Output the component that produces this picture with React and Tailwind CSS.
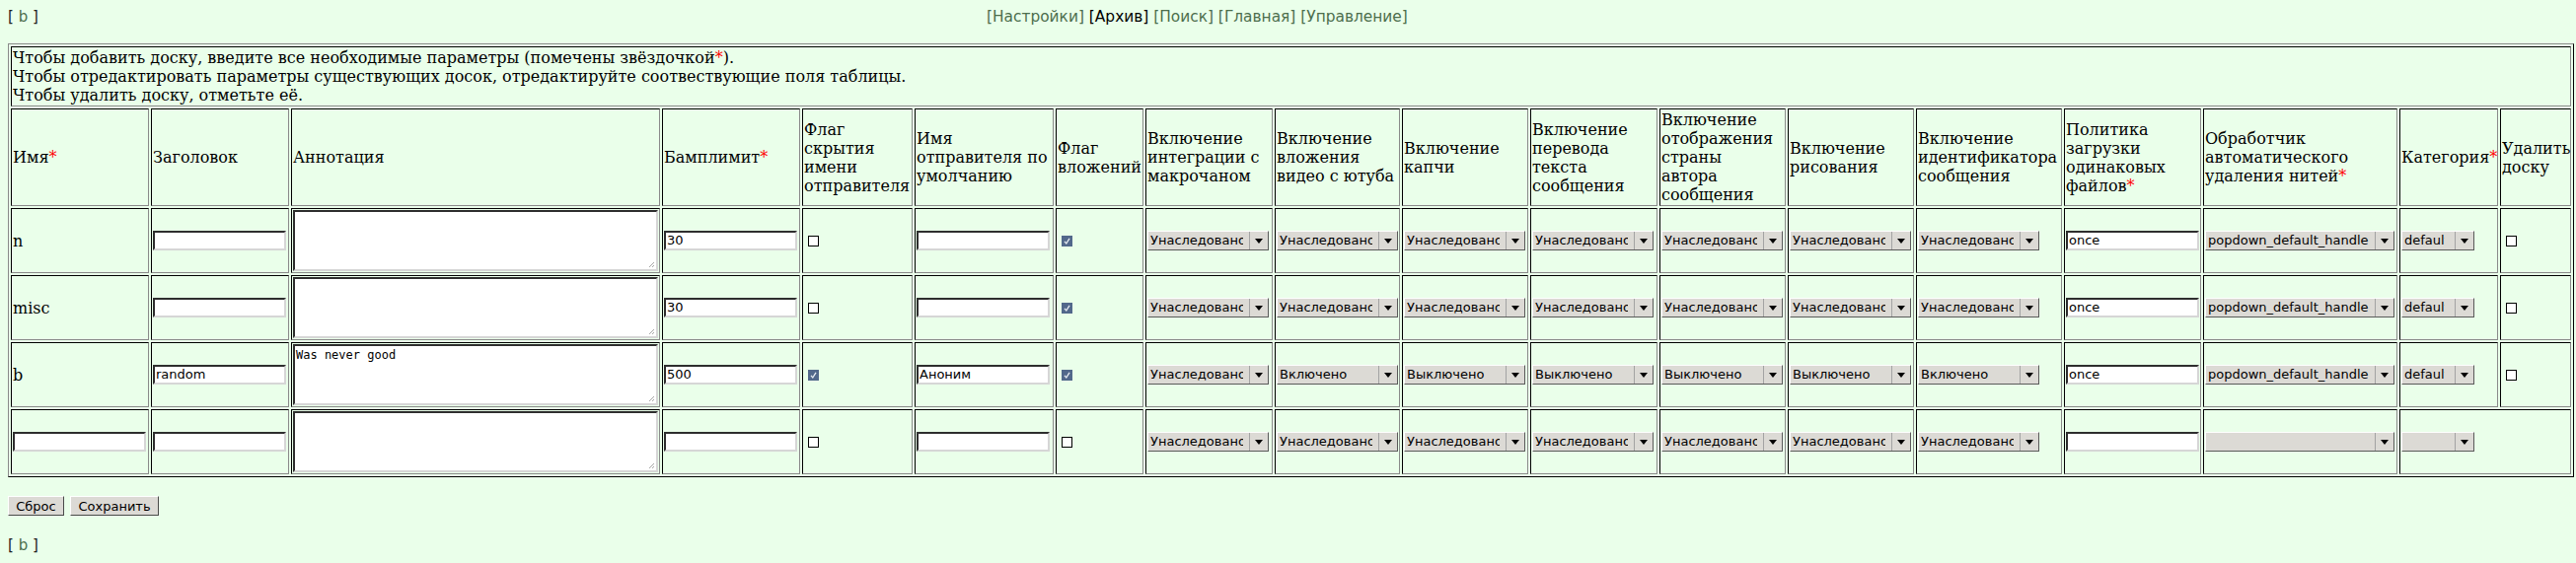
import clsx from "clsx";

const cols = [140, 140, 374, 140, 112, 141, 89, 129, 127, 128, 129, 128, 128, 148, 139, 197, 100, 72];
const colW = [
  "w-[140px]", "w-[140px]", "w-[374px]", "w-[140px]", "w-[112px]", "w-[141px]", "w-[89px]", "w-[129px]", "w-[127px]",
  "w-[128px]", "w-[129px]", "w-[128px]", "w-[128px]", "w-[148px]", "w-[139px]", "w-[197px]", "w-[100px]", "w-[72px]",
];

const star = <span className="text-[#ff0000]">*</span>;

const heads = [
  [<>Имя{star}</>],
  ["Заголовок"],
  ["Аннотация"],
  [<>Бамплимит{star}</>],
  ["Флаг", "скрытия", "имени", "отправителя"],
  ["Имя", "отправителя по", "умолчанию"],
  ["Флаг", "вложений"],
  ["Включение", "интеграции с", "макрочаном"],
  ["Включение", "вложения", "видео с ютуба"],
  ["Включение", "капчи"],
  ["Включение", "перевода", "текста", "сообщения"],
  ["Включение", "отображения", "страны", "автора", "сообщения"],
  ["Включение", "рисования"],
  ["Включение", "идентификатора", "сообщения"],
  ["Политика", "загрузки", "одинаковых", <>файлов{star}</>],
  ["Обработчик", "автоматического", <>удаления нитей{star}</>],
  [<>Категория{star}</>],
  ["Удалить", "доску"],
];

const inh = "Унаследовано";
const boards = [
  { name: "n", title: "", note: "", bump: "30", hide: false, anon: "", files: true, sel: [inh, inh, inh, inh, inh, inh, inh] },
  { name: "misc", title: "", note: "", bump: "30", hide: false, anon: "", files: true, sel: [inh, inh, inh, inh, inh, inh, inh] },
  {
    name: "b", title: "random", note: "Was never good", bump: "500", hide: true, anon: "Аноним", files: true,
    sel: [inh, "Включено", "Выключено", "Выключено", "Выключено", "Выключено", "Включено"],
  },
];

function Cell({ children, colSpan, className }) {
  return (
    <td
      colSpan={colSpan}
      className={clsx(
        "border border-t-black border-l-black border-r-[#8a8a8a] border-b-[#8a8a8a] p-px text-left align-middle font-normal",
        className
      )}
    >
      {children}
    </td>
  );
}

function Inp({ v = "" }) {
  return (
    <div className="h-[20px] w-[135px] overflow-hidden whitespace-nowrap border-2 border-t-[#2e2e2e] border-l-[#2e2e2e] border-r-[#d6d6d6] border-b-[#d6d6d6] bg-white px-px font-['DejaVu_Sans',sans-serif] text-[13px] leading-[16px] text-black">
      {v}
    </div>
  );
}

function Area({ text = "" }) {
  return (
    <div className="relative h-[62px] w-[370px] border-2 border-t-[#2e2e2e] border-l-[#2e2e2e] border-r-[#d6d6d6] border-b-[#d6d6d6] bg-white px-px pt-[2px] font-['DejaVu_Sans_Mono',monospace] text-[12px] leading-[14px] text-black">
      {text}
      <svg className="absolute right-px bottom-px" width="8" height="8" viewBox="0 0 8 8">
        <path d="M7 2 L2 7 M7 5 L5 7" stroke="#a8a8a8" strokeWidth="1" />
      </svg>
    </div>
  );
}

function Sel({ text = "", w = "w-[123px]", clip = "w-[96px]" }) {
  return (
    <div
      className={clsx(
        "flex h-[20px] items-stretch border border-t-white border-l-white border-r-[#5a5a5a] border-b-[#5a5a5a] bg-[#dcdad5] font-['DejaVu_Sans',sans-serif] text-[13px] leading-[18px] text-black",
        w
      )}
    >
      <span className={clsx("overflow-hidden whitespace-nowrap pl-[2px]", clip)}>{text}</span>
      <span className="flex-1" />
      <span className="flex w-[19px] items-center justify-center border-l border-l-[#a3a3a3]">
        <svg width="8" height="5" viewBox="0 0 8 5">
          <path d="M0 0 H8 L4 5 Z" fill="#000" />
        </svg>
      </span>
    </div>
  );
}

function Check({ on }) {
  if (on) {
    return (
      <div className="ml-[4px] flex h-[11px] w-[11px] items-center justify-center bg-[#52688b]">
        <svg width="9" height="9" viewBox="0 0 9 9">
          <path d="M2 4.8 L3.8 7 L7 1.8" stroke="#e8ecf2" strokeWidth="1.3" fill="none" />
        </svg>
      </div>
    );
  }
  return <div className="ml-[4px] h-[11px] w-[11px] border border-black bg-white" />;
}

function Btn({ children, w }) {
  return (
    <div
      className={clsx(
        "flex h-[20px] items-center justify-center border border-t-white border-l-white border-r-[#4a4a4a] border-b-[#4a4a4a] bg-[#dcdad5] font-['DejaVu_Sans',sans-serif] text-[13px] text-black",
        w
      )}
    >
      {children}
    </div>
  );
}

function BoardLink() {
  return (
    <div className="font-['DejaVu_Sans',sans-serif] text-[15px] leading-[18px] text-[#222]">
      [ <span className="text-[#4d6e4d]">b</span> ]
    </div>
  );
}

export default function App() {
  return (
    <div className="min-h-screen bg-[#eaffea] p-2 font-['DejaVu_Serif',serif] text-[16px] leading-[19px] text-black">
      {/* top bar */}
      <div className="grid grid-cols-[992px_auto]">
        <BoardLink />
        <div className="font-['DejaVu_Sans',sans-serif] text-[15.4px] leading-[18px] text-[#4d6e4d]">
          [Настройки] <span className="text-black">[Архив]</span> [Поиск] [Главная] [Управление]
        </div>
      </div>

      <table className="mt-[18px] w-[2601px] table-fixed border-separate border-spacing-[2px] border border-t-[#8a8a8a] border-l-[#8a8a8a] border-r-black border-b-black">
        <colgroup>
          {cols.map((c, i) => (
            <col key={i} className={colW[i]} />
          ))}
        </colgroup>
        <tbody>
          <tr>
            <Cell colSpan={18}>
              Чтобы добавить доску, введите все необходимые параметры (помечены звёздочкой{star}).
              <br />
              Чтобы отредактировать параметры существующих досок, отредактируйте соотвествующие поля таблицы.
              <br />
              Чтобы удалить доску, отметьте её.
            </Cell>
          </tr>
          <tr>
            {heads.map((lines, i) => (
              <Cell key={i}>
                {lines.map((l, j) => (
                  <div key={j} className="whitespace-nowrap">
                    {l}
                  </div>
                ))}
              </Cell>
            ))}
          </tr>

          {boards.map((b) => (
            <tr key={b.name}>
              <Cell>{b.name}</Cell>
              <Cell>
                <Inp v={b.title} />
              </Cell>
              <Cell>
                <Area text={b.note} />
              </Cell>
              <Cell>
                <Inp v={b.bump} />
              </Cell>
              <Cell>
                <Check on={b.hide} />
              </Cell>
              <Cell>
                <Inp v={b.anon} />
              </Cell>
              <Cell>
                <Check on={b.files} />
              </Cell>
              {b.sel.map((s, i) => (
                <Cell key={i}>
                  <Sel text={s} />
                </Cell>
              ))}
              <Cell>
                <Inp v="once" />
              </Cell>
              <Cell>
                <Sel text="popdown_default_handle" w="w-[192px]" clip="w-[165px]" />
              </Cell>
              <Cell>
                <Sel text="default" w="w-[74px]" clip="w-[43px]" />
              </Cell>
              <Cell>
                <Check on={false} />
              </Cell>
            </tr>
          ))}

          <tr>
            <Cell>
              <Inp />
            </Cell>
            <Cell>
              <Inp />
            </Cell>
            <Cell>
              <Area />
            </Cell>
            <Cell>
              <Inp />
            </Cell>
            <Cell>
              <Check on={false} />
            </Cell>
            <Cell>
              <Inp />
            </Cell>
            <Cell>
              <Check on={false} />
            </Cell>
            {[0, 1, 2, 3, 4, 5, 6].map((i) => (
              <Cell key={i}>
                <Sel text={inh} />
              </Cell>
            ))}
            <Cell>
              <Inp />
            </Cell>
            <Cell>
              <Sel w="w-[192px]" clip="w-[165px]" />
            </Cell>
            <Cell colSpan={2}>
              <Sel w="w-[74px]" clip="w-[43px]" />
            </Cell>
          </tr>
        </tbody>
      </table>

      <div className="mt-[19px] flex gap-[6px]">
        <Btn w="w-[57px]">Сброс</Btn>
        <Btn w="w-[90px]">Сохранить</Btn>
      </div>

      <div className="mt-[21px]">
        <BoardLink />
      </div>
    </div>
  );
}
